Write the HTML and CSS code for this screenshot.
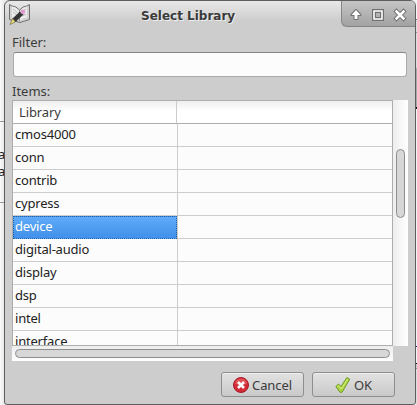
FILE: index.html
```html
<!DOCTYPE html>
<html lang="en">
<head>
<meta charset="utf-8">
<title>Select Library</title>
<link rel="stylesheet" href="styles.css">
</head>
<body>
<div class="behind-left"><span>a</span><span>a</span></div>
<main class="dialog">
  <header class="titlebar">
    <svg class="app-icon" width="24" height="23" viewBox="0 0 24 23">
      <path d="M1.500 1.500L4 3Q8 3 11.500 7Q15 3 19 3L21.500 1.500V16.500L12 19.500L1.500 16.500Z" fill="#d2d2d2" stroke="#707070"/>
      <path d="M4 3.500Q8 4 11 7.500V17.500Q8 14.500 4 14.500Z" fill="#ececec"/>
      <path d="M12 7.500Q15 4 19 3.500V14.500Q15 14.500 12 17.500Z" fill="#ececec"/>
      <path d="M5 6l5 4M5 9l5 4M13 9l5-3M14 13l4-2" stroke="#bbb" fill="none"/>
      <path d="M11.500 7v11" stroke="#888"/>
      <path d="M4.500 15.500L12 8.500L15.500 11.500L7.500 19Z" fill="#353535"/>
      <path d="M4.500 15.500L2 21.500L7.500 19Z" fill="#eadb7a" stroke="#665f40" stroke-width=".6"/>
      <circle cx="14.800" cy="8.800" r="2.400" fill="#df9bd0"/>
    </svg>
    <h1>Select Library</h1>
    <div class="window-buttons">
      <svg width="74" height="26" viewBox="0 0 74 26">
        <path d="M10.500 14L15 9l4.500 5H16.500v4h-3v-4z" fill="#fff" stroke="#707070" stroke-width="2" stroke-linejoin="round" paint-order="stroke"/>
        <path d="M33 10h8v8h-8z" fill="none" stroke="#707070" stroke-width="4"/>
        <path d="M33 10h8v8h-8z" fill="none" stroke="#fff" stroke-width="1.600"/>
        <path d="M55.500 10.500l7 7m0-7l-7 7" stroke="#707070" stroke-width="4.500" stroke-linecap="square"/>
        <path d="M55.500 10.500l7 7m0-7l-7 7" stroke="#fff" stroke-width="2.500" stroke-linecap="square"/>
      </svg>
    </div>
  </header>
  <section class="content">
    <label class="label" for="filter">Filter:</label>
    <input class="filter" id="filter" type="text">
    <div class="label items-label">Items:</div>
    <div class="list">
      <div class="table">
        <div class="head"><span>Library</span></div>
        <div class="row"><span>cmos4000</span></div>
        <div class="row"><span>conn</span></div>
        <div class="row"><span>contrib</span></div>
        <div class="row"><span>cypress</span></div>
        <div class="row selected"><span>device</span></div>
        <div class="row"><span>digital-audio</span></div>
        <div class="row"><span>display</span></div>
        <div class="row"><span>dsp</span></div>
        <div class="row"><span>intel</span></div>
        <div class="row"><span>interface</span></div>
      </div>
      <div class="vscroll"><div class="vthumb"></div></div>
      <div class="hscroll"><div class="hthumb"></div></div>
    </div>
    <div class="actions">
      <button class="button cancel">
        <svg width="16" height="16" viewBox="0 0 16 16">
          <circle cx="8" cy="8" r="7.500" fill="#d22a36" stroke="#a61c2b"/>
          <path d="M2 7a6 5.500 0 0 1 12 0q-6 2-12 0" fill="#ea6a6a" opacity=".6"/>
          <path d="M5 5l6 6m0-6l-6 6" stroke="#fff" stroke-width="2.600"/>
        </svg>Cancel</button>
      <button class="button ok">
        <svg width="16" height="16" viewBox="0 0 16 16">
          <path d="M.8 9.500L3.500 7 6 9.500 11.800 .6 14.800 2.200 7 15.300H5z" fill="#b0d544" stroke="#6d9a28" stroke-linejoin="round"/>
          <path d="M2.500 9.300l1-.7 2.900 3.300L12.500 2.300" fill="none" stroke="#d5ec86"/>
        </svg>OK</button>
    </div>
  </section>
</main>
<div class="behind-right"></div>
</body>
</html>
```
FILE: styles.css
```css
* { box-sizing: border-box; }
body {
  margin: 0;
  width: 417px;
  height: 405px;
  overflow: hidden;
  position: relative;
  display: flex;
  background: linear-gradient(90deg, #fafafa, #e6e6e8 5px, #eee);
  font: 13px/18px "Noto Sans", sans-serif;
  color: #3c3c3c;
}
.behind-left {
  width: 4px;
  flex: none;
  height: 82px;
  margin-top: 121px;
  padding-top: 24px;
  border-top: 1px solid #999;
  border-bottom: 1px solid #999;
  overflow: hidden;
  color: #222;
  line-height: 17px;
}
.behind-left span { display: block; margin-left: -2px; }
.behind-right {
  flex: 1;
  background: linear-gradient(#f6f6f6 19px, #777 19px 20px, #ddd 20px 32px, #999 32px 33px, #ddd 33px 68px, #aaa 68px 107px, #111 107px 109px, #f4f4f8 109px 346px, #20208a 346px 347px, #f4f4f8 347px 363px, #111 363px 364px, #ccc 364px 368px, #888 368px 369px, #ddd 369px);
}
.dialog {
  width: 412px;
  height: 405px;
  flex: none;
  border: 1px solid #5f5d5e;
  border-radius: 6px 6px 3px 3px;
  background: linear-gradient(#e8e8e8, #cdcdcd 20px);
  overflow: hidden;
}
.titlebar { display: flex; height: 26px; }
.app-icon { margin: 2px 0 0 3px; flex: none; }
h1 {
  flex: 1;
  margin: 0 0 0 109px;
  font: bold 12px/31px "DejaVu Sans", sans-serif;
  white-space: nowrap;
  color: #3a3a3a;
  text-shadow: 1px 1px #eee;
}
.window-buttons {
  width: 74px;
  height: 26px;
  border: solid #858585;
  border-width: 0 0 1px 1px;
  border-radius: 0 0 0 6px;
  background: linear-gradient(#c5c5c5, #a2a2a2);
}
.window-buttons svg { display: block; margin-left: -1px; }
.content { padding: 6px 7px 0; }
.label { display: block; height: 19px; }
.filter {
  display: block;
  width: 394px;
  height: 25px;
  margin: 0 0 0 1px;
  border: 1px solid #aaa;
  border-top-color: #858585;
  border-radius: 3px;
  background: #fcfcfc;
}
.items-label { height: 23px; padding-top: 5px; }
.list {
  display: grid;
  grid-template: 246px 15px / 381px 15px;
}
.table {
  border: 1px solid #adadad;
  overflow: hidden;
  background: #fcfcfc;
  color: #222;
}
.head {
  height: 23px;
  border-bottom: 1px solid #adadad;
  background: linear-gradient(#eee, #fff 10px);
  color: #3c3c3c;
}
.head span {
  display: block;
  width: 164px;
  height: 22px;
  padding-left: 6px;
  line-height: 23px;
  letter-spacing: -.1px;
  border-right: 1px solid #ccc;
}
.row { height: 23px; border-bottom: 1px solid #ccc; letter-spacing: -.2px; }
.row span {
  display: block;
  width: 165px;
  height: 22px;
  padding-left: 2px;
  line-height: 20px;
  border-right: 1px solid #ccc;
}
.selected {
  background: linear-gradient(#ccc, #ccc) 164px 0 / 1px 100% no-repeat;
}
.selected span {
  width: 164px;
  height: 23px;
  color: #fff;
  padding-left: 1px;
  line-height: 19px;
  background: linear-gradient(#60abfa, #3f90e9);
  border: 1px dotted #24609f;
}
.vscroll { padding: 49px 3px 0; background: linear-gradient(90deg, #ededed, #fff); }
.vthumb { height: 69px; border: 1px solid #8e8e8e; border-radius: 5px; background: #d7d7d7; }
.hscroll { padding: 3px; background: linear-gradient(#ededed, #fff); }
.hthumb { height: 9px; border: 1px solid #8e8e8e; border-radius: 5px; background: #d7d7d7; }
.actions { display: flex; justify-content: flex-end; gap: 8px; padding: 11px 13px 0 0; }
.button {
  display: flex;
  align-items: center;
  justify-content: center;
  gap: 3px;
  width: 83px;
  height: 25px;
  padding: 0;
  border: 1px solid #8e8e8e;
  border-radius: 3px;
  background: linear-gradient(#e2e2e2, #c9c9c9);
  box-shadow: inset 0 1px #eee;
  font: inherit;
  line-height: 16px;
  letter-spacing: -.1px;
  color: #3c3c3c;
}
```
